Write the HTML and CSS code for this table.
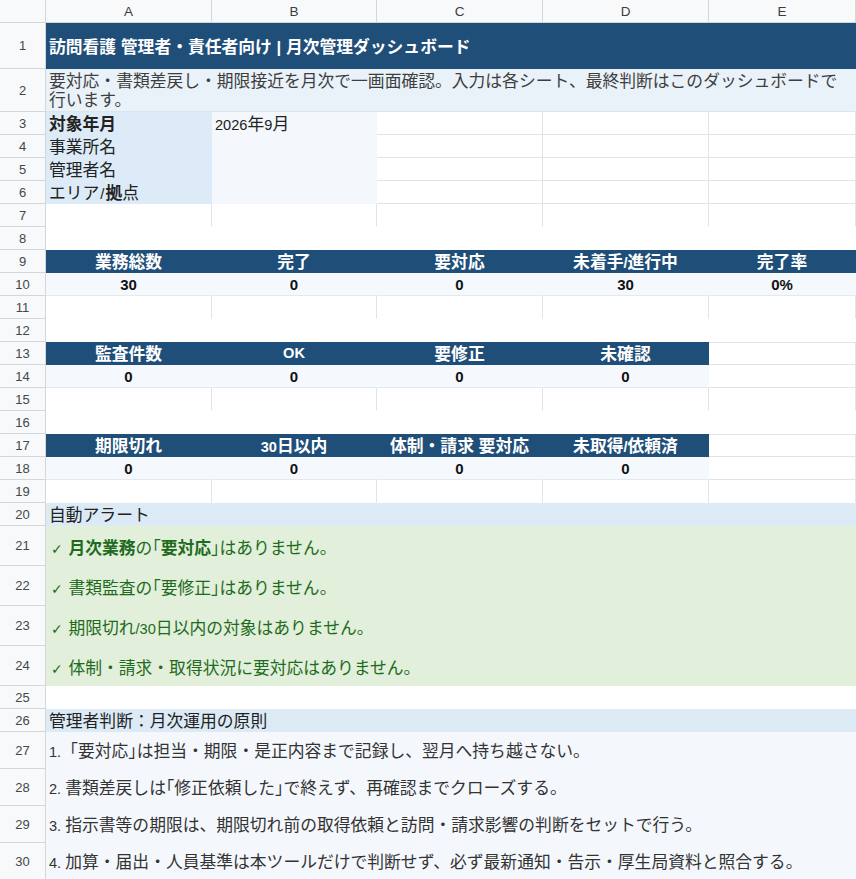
FILE: index.html
```html
<!DOCTYPE html>
<html lang="ja">
<head>
<meta charset="utf-8">
<title>月次管理ダッシュボード</title>
<link rel="stylesheet" href="styles.css">
</head>
<body>
<div class="sheet">
  <div class="corner"></div>
  <div class="ch">A</div><div class="ch">B</div><div class="ch">C</div><div class="ch">D</div><div class="ch">E</div>

  <div class="rh">1</div>
  <div class="c s5 title"><span class="t">訪問看護<span class="l"> </span>管理者・責任者向け<span class="l pipe"> | </span>月次管理ダッシュボード</span></div>

  <div class="rh">2</div>
  <div class="c s5 note"><span class="t">要対応・書類差戻し・期限接近を月次で一画面確認。入力は各シート、最終判断はこのダッシュボードで<br>行います。</span></div>

  <div class="rh">3</div>
  <div class="c lab b"><span class="t">対象年月</span></div><div class="c inp"><span class="t"><span class="n">2026</span>年<span class="n">9</span>月</span></div><div class="c"></div><div class="c"></div><div class="c"></div>
  <div class="rh">4</div>
  <div class="c lab"><span class="t">事業所名</span></div><div class="c inp"></div><div class="c"></div><div class="c"></div><div class="c"></div>
  <div class="rh">5</div>
  <div class="c lab"><span class="t">管理者名</span></div><div class="c inp"></div><div class="c"></div><div class="c"></div><div class="c"></div>
  <div class="rh">6</div>
  <div class="c lab"><span class="t">エリア<span class="n sl">/</span><span class="b">拠</span>点</span></div><div class="c inp"></div><div class="c"></div><div class="c"></div><div class="c"></div>
  <div class="rh">7</div>
  <div class="c nb"></div><div class="c nb"></div><div class="c nb"></div><div class="c nb"></div><div class="c nb"></div>
  <div class="rh">8</div>
  <div class="c s5 blank"></div>

  <div class="rh">9</div>
  <div class="c kh"><span class="t">業務総数</span></div><div class="c kh"><span class="t">完了</span></div><div class="c kh"><span class="t">要対応</span></div><div class="c kh"><span class="t">未着手<span class="n">/</span>進行中</span></div><div class="c kh"><span class="t">完了率</span></div>
  <div class="rh">10</div>
  <div class="c kv"><span class="t">30</span></div><div class="c kv"><span class="t">0</span></div><div class="c kv"><span class="t">0</span></div><div class="c kv"><span class="t">30</span></div><div class="c kv"><span class="t">0%</span></div>
  <div class="rh">11</div>
  <div class="c nb"></div><div class="c nb"></div><div class="c nb"></div><div class="c nb"></div><div class="c nb"></div>
  <div class="rh">12</div>
  <div class="c s5 blank"></div>

  <div class="rh">13</div>
  <div class="c kh"><span class="t">監査件数</span></div><div class="c kh"><span class="t n">OK</span></div><div class="c kh"><span class="t">要修正</span></div><div class="c kh"><span class="t">未確認</span></div><div class="c top"></div>
  <div class="rh">14</div>
  <div class="c kv"><span class="t">0</span></div><div class="c kv"><span class="t">0</span></div><div class="c kv"><span class="t">0</span></div><div class="c kv"><span class="t">0</span></div><div class="c"></div>
  <div class="rh">15</div>
  <div class="c nb"></div><div class="c nb"></div><div class="c nb"></div><div class="c nb"></div><div class="c nb"></div>
  <div class="rh">16</div>
  <div class="c s5 blank"></div>

  <div class="rh">17</div>
  <div class="c kh"><span class="t">期限切れ</span></div><div class="c kh"><span class="t"><span class="n">30</span>日以内</span></div><div class="c kh"><span class="t">体制・請求<span class="l"> </span>要対応</span></div><div class="c kh"><span class="t">未取得<span class="n">/</span>依頼済</span></div><div class="c top"></div>
  <div class="rh">18</div>
  <div class="c kv"><span class="t">0</span></div><div class="c kv"><span class="t">0</span></div><div class="c kv"><span class="t">0</span></div><div class="c kv"><span class="t">0</span></div><div class="c"></div>
  <div class="rh">19</div>
  <div class="c nb"></div><div class="c nb"></div><div class="c nb"></div><div class="c nb"></div><div class="c nb"></div>

  <div class="rh">20</div>
  <div class="c s5 sec"><span class="t">自動アラート</span></div>
  <div class="rh">21</div>
  <div class="c s5 ok"><span class="t"><span class="chk">✓</span><span class="l"> </span><span class="m">月次業務</span>の<span class="hb">「</span><span class="b">要対応</span><span class="hb">」</span>はありません。</span></div>
  <div class="rh">22</div>
  <div class="c s5 ok"><span class="t"><span class="chk">✓</span><span class="l"> </span>書類監査の<span class="hb">「</span>要修正<span class="hb">」</span>はありません。</span></div>
  <div class="rh">23</div>
  <div class="c s5 ok"><span class="t"><span class="chk">✓</span><span class="l"> </span>期限切れ<span class="n">/30</span>日以内の対象はありません。</span></div>
  <div class="rh">24</div>
  <div class="c s5 ok"><span class="t"><span class="chk">✓</span><span class="l"> </span>体制・請求・取得状況に要対応はありません。</span></div>
  <div class="rh">25</div>
  <div class="c s5 blank"></div>

  <div class="rh">26</div>
  <div class="c s5 sec"><span class="t">管理者判断：月次運用の原則</span></div>
  <div class="rh">27</div>
  <div class="c s5 rule"><span class="t"><span class="n">1.</span>「要対応<span class="hb">」</span>は担当・期限・是正内容まで記録し、翌月へ持ち越さない。</span></div>
  <div class="rh">28</div>
  <div class="c s5 rule"><span class="t"><span class="n">2. </span>書類差戻しは<span class="hb">「</span>修正依頼した<span class="hb">」</span>で終えず、再確認までクローズする。</span></div>
  <div class="rh">29</div>
  <div class="c s5 rule"><span class="t"><span class="n">3. </span>指示書等の期限は、期限切れ前の取得依頼と訪問・請求影響の判断をセットで行う。</span></div>
  <div class="rh">30</div>
  <div class="c s5 rule"><span class="t"><span class="n">4. </span>加算・届出・人員基準は本ツールだけで判断せず、必ず最新通知・告示・厚生局資料と照合する。</span></div>
</div>
</body>
</html>
```

FILE: styles.css
```css
html, body {
  margin: 0;
  padding: 0;
  background: #ffffff;
  overflow: hidden;
}

.sheet {
  display: grid;
  grid-template-columns: 46px 166px 165px 166px 166px 147px;
  grid-template-rows: 23px 46px 43px repeat(18, 23px) repeat(4, 40px) 23px 23px repeat(4, 37px);
  width: 856px;
  font-family: "Liberation Sans", "Noto Sans CJK JP", sans-serif;
  font-size: 16.8px;
  color: #222222;
}

.corner,
.ch,
.rh {
  background: #f8f9fa;
  box-sizing: border-box;
  border-right: 1px solid #d4d6d9;
  border-bottom: 1px solid #d4d6d9;
  font-family: "Liberation Sans", sans-serif;
  font-size: 13px;
  color: #444746;
  display: flex;
  align-items: center;
  justify-content: center;
}

.ch {
  color: #3c3c3c;
  font-size: 13.5px;
}

.c {
  box-sizing: border-box;
  border-right: 1px solid #e2e3e3;
  border-bottom: 1px solid #e2e3e3;
  display: flex;
  align-items: center;
  padding: 0 3px;
  white-space: nowrap;
  min-width: 0;
}

.t {
  white-space: pre;
}

.c.nb {
  border-bottom-color: transparent;
}

.c.top {
  border-top: 1px solid #e2e3e3;
}

.s5 {
  grid-column: span 5;
}

.b {
  font-weight: 700;
}

.m {
  font-weight: 600;
}

.n {
  font-size: 14.6px;
}

.sl {
  font-size: 15px;
  padding: 0 1px;
}

.hb {
  font-feature-settings: "halt";
}

.title {
  background: #1f4e79;
  color: #ffffff;
  font-weight: 700;
  border-color: #1f4e79;
}

.pipe {
  font-size: 16.8px;
}

.note {
  background: #e9f1f9;
  color: #3e3e3e;
  line-height: 19px;
  align-items: flex-end;
  padding-bottom: 1px;
  border-right-color: transparent;
  border-bottom-color: #dfe4ea;
}

.lab {
  background: #dcebf7;
  border-color: #dcebf7;
}

.inp {
  background: #f4f8fc;
  border-color: #f4f8fc;
}

.blank {
  border-color: transparent;
  background: #ffffff;
}

.kh {
  background: #1f4e79;
  color: #ffffff;
  font-weight: 700;
  justify-content: center;
  border-color: #1f4e79;
}

.kv {
  background: #f5f9fd;
  font-weight: 700;
  font-size: 15px;
  justify-content: center;
  border-right-color: #f5f9fd;
  border-bottom-color: #e4e9ef;
  color: #111111;
}

.sec {
  background: #dceaf6;
  border-color: #dceaf6;
  color: #222222;
}

.ok {
  background: #e2efda;
  border-color: #e2efda;
  color: #1e6b1e;
  padding-top: 2px;
}

.chk {
  font-family: "DejaVu Sans", sans-serif;
  font-size: 14px;
  padding-left: 2px;
  padding-right: 1px;
}

.rule {
  background: #f4f8fc;
  border-color: #f4f8fc;
  color: #333333;
}
```
